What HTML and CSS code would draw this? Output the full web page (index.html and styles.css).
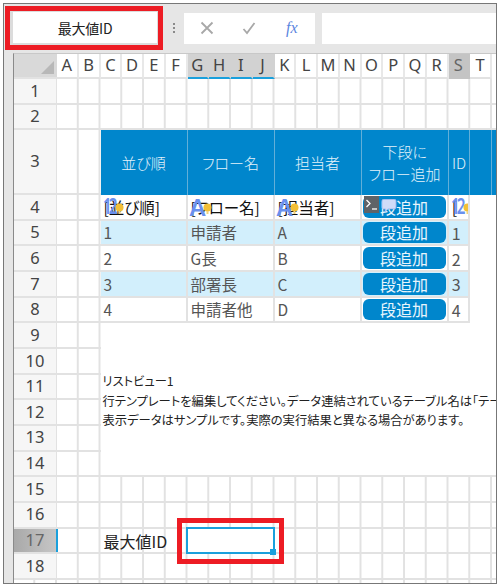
FILE: index.html
```html
<!DOCTYPE html>
<html lang="ja">
<head>
<meta charset="utf-8">
<title>最大値ID</title>
<link rel="stylesheet" href="styles.css">
</head>
<body>
<div class="window">
  <div class="toolbar">
    <div class="namebox"><div class="namebox-inner">最大値ID</div></div>
    <div class="grip"><i></i><i></i><i></i></div>
    <div class="fbuttons">
      <svg class="ficon" viewBox="0 0 14 14"><path d="M1.5 1.5 12.5 12.5M12.5 1.5 1.5 12.5" fill="none" stroke="#a8a8a8" stroke-width="1.8"/></svg>
      <svg class="ficon" viewBox="0 0 14 14"><path d="M1.5 8 5 12 12.5 2" fill="none" stroke="#a8a8a8" stroke-width="1.8"/></svg>
      <span class="fx">fx</span>
    </div>
    <div class="finput"></div>
  </div>
  <div class="sheet">
    <div class="corner"><span class="tri"></span></div>
    <div class="ch">A</div><div class="ch">B</div><div class="ch">C</div><div class="ch">D</div><div class="ch">E</div><div class="ch">F</div>
    <div class="ch hl">G</div><div class="ch hl">H</div><div class="ch hl">I</div><div class="ch hl">J</div>
    <div class="ch">K</div><div class="ch">L</div><div class="ch">M</div><div class="ch">N</div><div class="ch">O</div><div class="ch">P</div><div class="ch">Q</div><div class="ch">R</div>
    <div class="ch sel">S</div><div class="ch">T</div>

    <div class="rh">1</div><div class="rh">2</div><div class="rh">3</div><div class="rh">4</div><div class="rh">5</div><div class="rh">6</div>
    <div class="rh">7</div><div class="rh">8</div><div class="rh">9</div><div class="rh">10</div><div class="rh">11</div><div class="rh">12</div>
    <div class="rh">13</div><div class="rh">14</div><div class="rh">15</div><div class="rh">16</div><div class="rh cur">17</div><div class="rh">18</div>

    <div class="panel">
      <div class="table">
        <div class="th">並び順</div>
        <div class="th">フロー名</div>
        <div class="th">担当者</div>
        <div class="th">下段に<br>フロー追加</div>
        <div class="th">ID</div>
        <div class="th th-rest"></div>

        <div class="td tpl"><span class="tag num">12</span><svg class="bulb" viewBox="0 0 9 12"><circle cx="4.5" cy="4.5" r="4" fill="#f2c037"/><path d="M3.5 8h2v3h-2z" fill="#f2d27a"/></svg>[並び順]</div>
        <div class="td tpl"><span class="tag big">A</span><svg class="bulb" viewBox="0 0 9 12"><circle cx="4.5" cy="4.5" r="4" fill="#f2c037"/><path d="M3.5 8h2v3h-2z" fill="#f2d27a"/></svg>[フロー名]</div>
        <div class="td tpl"><span class="tag big">A</span><svg class="bulb" viewBox="0 0 9 12"><circle cx="4.5" cy="4.5" r="4" fill="#f2c037"/><path d="M3.5 8h2v3h-2z" fill="#f2d27a"/></svg>[担当者]</div>
        <div class="td btncell"><div class="btn">段追加</div>
          <svg class="term" viewBox="0 0 15 17"><rect width="15" height="17" fill="#5f6368"/><path d="M2.5 4 6 7.5 2.5 11" fill="none" stroke="#fff" stroke-width="1.3"/><path d="M8 13h5" stroke="#fff" stroke-width="1.3"/></svg>
          <svg class="chat" viewBox="0 0 16 14"><path d="M2 .5h12a1.5 1.5 0 0 1 1.5 1.5v7a1.5 1.5 0 0 1-1.5 1.5H7L4 13.5v-3H2A1.5 1.5 0 0 1 .5 9V2A1.5 1.5 0 0 1 2 .5z" fill="#cfdcf8" stroke="#a9bdf0"/></svg>
        </div>
        <div class="td tpl id"><span class="tag num">12</span><svg class="bulb" viewBox="0 0 9 12"><circle cx="4.5" cy="4.5" r="4" fill="#f2c037"/><path d="M3.5 8h2v3h-2z" fill="#f2d27a"/></svg>[</div>
        <div class="blank"></div>

        <div class="td alt">1</div><div class="td alt">申請者</div><div class="td alt">A</div><div class="td alt btncell"><div class="btn">段追加</div></div><div class="td alt id">1</div><div class="blank"></div>
        <div class="td">2</div><div class="td">G長</div><div class="td">B</div><div class="td btncell"><div class="btn">段追加</div></div><div class="td id">2</div><div class="blank"></div>
        <div class="td alt">3</div><div class="td alt">部署長</div><div class="td alt">C</div><div class="td alt btncell"><div class="btn">段追加</div></div><div class="td alt id">3</div><div class="blank"></div>
        <div class="td">4</div><div class="td">申請者他</div><div class="td">D</div><div class="td btncell"><div class="btn">段追加</div></div><div class="td id">4</div><div class="blank"></div>
      </div>
      <div class="note">
        <p>リストビュー1</p>
        <p>行テンプレートを編集してください。データ連結されているテーブル名は「テーブル名」です。</p>
        <p>表示データはサンプルです。実際の実行結果と異なる場合があります。</p>
      </div>
    </div>

    <div class="label">最大値ID</div>
    <div class="inputcell"><div class="redmark"></div><div class="handle"></div></div>
  </div>
</div>
</body>
</html>
```

FILE: styles.css
```css
* { box-sizing: border-box; }
html, body { margin: 0; background: #fff; }
body { font-family: "Noto Sans CJK JP", "Noto Sans", sans-serif; font-feature-settings: "palt"; }

.window {
  width: 494px; height: 581px; margin: 3px 0 0 3px;
  background: #e6e6e6;
  border: 1px solid #777;
  display: flex; flex-direction: column;
  overflow: hidden;
}

.toolbar { display: flex; align-items: center; height: 49px; padding: 2px 0 3px 1px; flex: none; }
.namebox { width: 158px; height: 44px; border: 5px solid #ed1c24; flex: none; }
.namebox-inner {
  height: 100%; background: #fff; border: solid #dcdcdc; border-width: 1px 1px 2px 3px;
  display: flex; align-items: center; justify-content: center;
  font-size: 14px; color: #222; letter-spacing: -.2px;
}
.grip { width: 21px; flex: none; display: flex; flex-direction: column; align-items: center; gap: 2px; }
.grip i { width: 2px; height: 2px; background: #8a8a8a; display: block; }
.fbuttons {
  width: 131px; height: 31px; flex: none; background: #fff;
  display: flex; align-items: center; padding-left: 16px; gap: 28px;
}
.ficon { width: 14px; height: 14px; flex: none; }
.fx { font-family: "Liberation Serif", serif; font-style: italic; font-size: 16px; color: #5b86e0; margin-left: 2px; }
.finput { flex: 1; height: 31px; margin-left: 7px; background: #fff; }

.sheet {
  flex: 1; margin: 0 0 0 9px;
  border-left: 1px solid #8a8a8a; border-top: 1px solid #c8c8c8;
  display: grid;
  grid-template-columns: 43px repeat(20, 21.76px) 1fr;
  grid-template-rows: 25px 25.5px 25.5px 65px repeat(15, 25.67px);
  align-content: start;
  background-color: #fff;
  background-image: linear-gradient(to right, transparent calc(100% - 2px), #e2e2e2 0);
  background-size: 21.76px 100%;
  background-position: 43px 0;
  overflow: hidden;
}

.corner { background: #d9d9d9; position: relative; border-bottom: 2px solid #e2e2e2; }
.tri {
  position: absolute; right: 3px; bottom: 3px; width: 0; height: 0;
  border-style: solid; border-width: 0 0 13px 13px;
  border-color: transparent transparent #b8b8b8 transparent;
}
.ch {
  display: flex; align-items: center; justify-content: center;
  font-family: "Noto Sans", sans-serif; font-size: 16.5px; color: #444; line-height: 1;
  border-bottom: 2px solid #e2e2e2; background: #fff; border-right: 2px solid #e8e8e8;
}
.ch.hl { background: #d2d2d2; border-right-color: #d2d2d2; border-bottom-color: #1aa0dc; }
.ch.sel { background: #c4c4c4; color: #666; border-right-color: #c4c4c4; border-bottom-color: #c4c4c4; }

.rh {
  grid-column: 1; position: relative;
  display: flex; align-items: center; justify-content: center;
  font-family: "Noto Sans", sans-serif; font-size: 16.5px; color: #444; line-height: 1;
  background: #f6f6f6; border-bottom: 2px solid #e2e2e2; border-right: 1px solid #e2e2e2;
}
.rh::after {
  content: ""; position: absolute; left: 100%; bottom: -2px;
  width: 452px; height: 2px; background: #e2e2e2;
}
.rh.cur { background: linear-gradient(to right, #a9a9a9, #c6c6c6); color: #666; }
.rh.cur::before {
  content: ""; position: absolute; right: -2px; top: 0; bottom: 0; width: 2px; background: #1aa0dc; z-index: 1;
}

.panel { grid-column: 4 / -1; grid-row: 4 / 16; background: #fff; position: relative; z-index: 1; border-bottom: 2px solid #e2e2e2; }
.table {
  display: grid;
  grid-template-columns: repeat(4, 87.04px) 21.76px 1fr;
  grid-template-rows: 65px repeat(5, 25.67px);
}
.th {
  background: #0086cc; color: #e4f2fb; font-size: 15px; font-weight: 300; line-height: 22px;
  display: flex; align-items: center; justify-content: center; text-align: center;
  border-right: 1px solid #62afd8; white-space: nowrap;
}
.th-rest {
  border-right: 0;
  background: linear-gradient(to right, #0086cc 21px, #62afd8 21px, #62afd8 22px, #0086cc 22px);
}
.td {
  position: relative; display: flex; align-items: center; padding: 1px 0 0 3px;
  font-size: 15.5px; color: #555; line-height: 1; white-space: nowrap; overflow: hidden;
  border-right: 2px solid #e2e2e2; border-bottom: 2px solid #e2e2e2;
}
.td.alt { background: #d2effc; }
.td.tpl { color: #111; overflow: visible; }
.td.id { padding-left: 3px; font-size: 16px; }
.td.tpl.id { overflow: hidden; }
.btncell { padding: 1px; overflow: visible; }
.btn {
  width: 100%; height: 100%; background: #0086cc; border-radius: 6px; color: #e8f5fc;
  display: flex; align-items: center; justify-content: center; font-size: 16px;
}
.blank { background: #fff; }

.tag { position: absolute; left: 2px; color: #6a90ee; z-index: 1; font-family: "Noto Sans", sans-serif; font-weight: 600; }
.tag.num { top: 2px; font-size: 21px; line-height: 19px; transform: scaleX(.72); transform-origin: left center; letter-spacing: -4px; }
.tag.big { top: 1px; font-size: 24px; line-height: 21px; }
.bulb { position: absolute; left: 14px; top: 8px; width: 9px; height: 12px; z-index: 1; }
.td:nth-child(8) .bulb, .td:nth-child(9) .bulb { left: 15px; }
.term { position: absolute; left: 2px; top: 1px; width: 15px; height: 17px; }
.chat { position: absolute; left: 19px; top: 4px; width: 16px; height: 13px; }

.note { padding: 49px 0 0 2px; font-size: 12.3px; line-height: 19.5px; color: #222; overflow: hidden; white-space: nowrap; }
.note p { margin: 0; }

.label {
  grid-column: 4 / 8; grid-row: 18;
  display: flex; align-items: center; padding-left: 3px;
  font-size: 16px; color: #222; position: relative; z-index: 1;
}
.inputcell {
  grid-column: 8 / 12; grid-row: 18; position: relative; z-index: 1;
  margin: -2px 0 0 -1.5px;
  border: 2px solid #1aa0dc; background: #fff;
}
.handle { position: absolute; right: -3px; bottom: -3px; width: 6px; height: 6px; background: #1aa0dc; }
.redmark { position: absolute; left: -11px; top: -11px; right: -11px; bottom: -12px; border: 5px solid #ed1c24; }
```
